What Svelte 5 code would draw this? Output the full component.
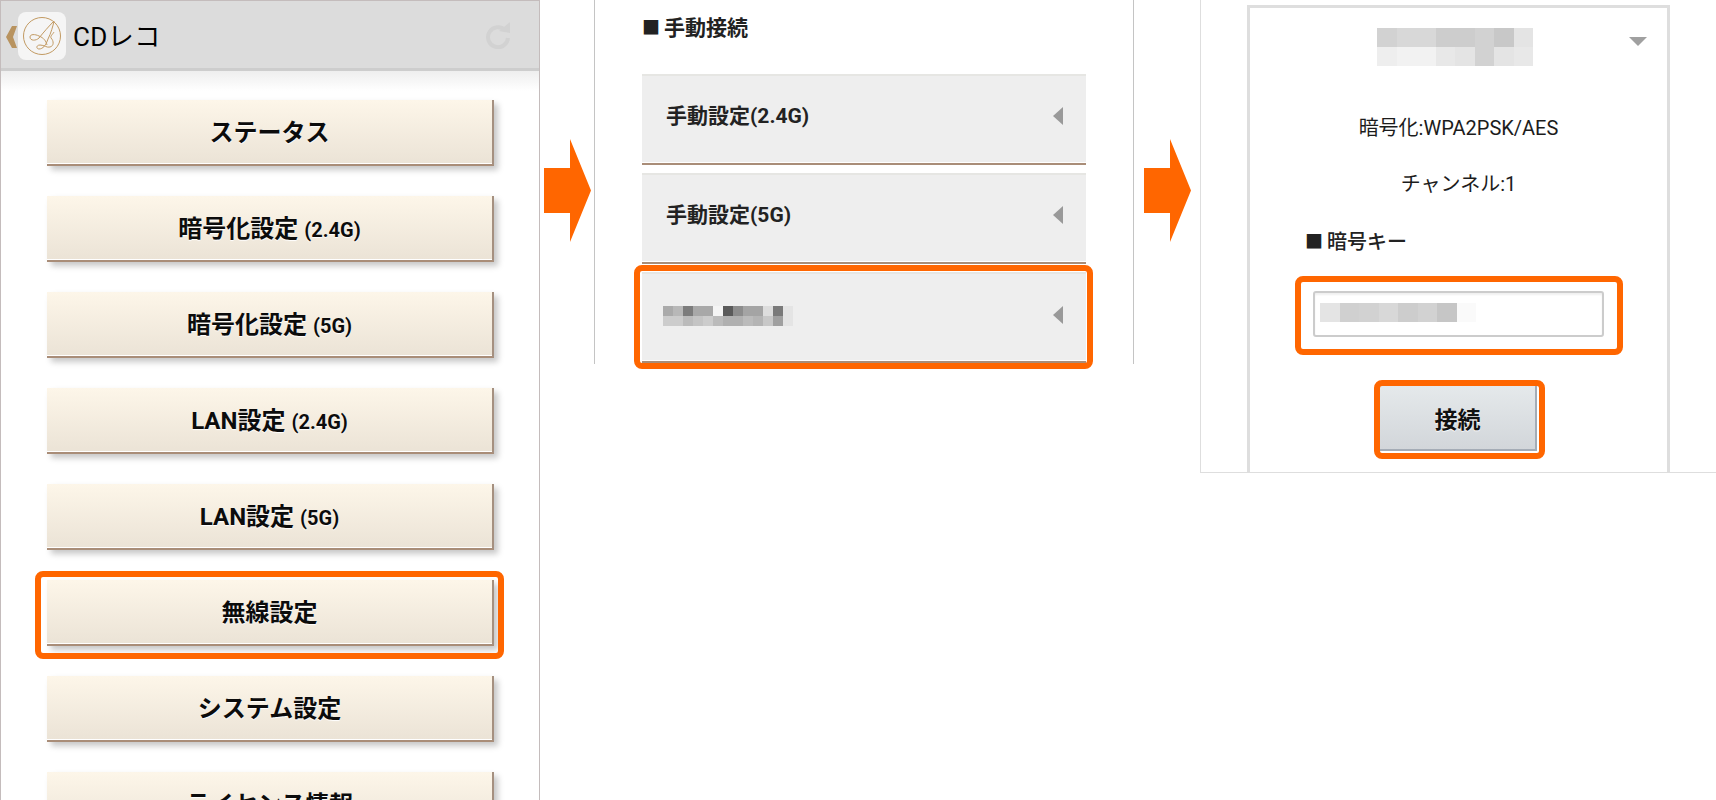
<script>
  const menu = [
    { label: "ステータス" },
    { label: "暗号化設定", small: "(2.4G)" },
    { label: "暗号化設定", small: "(5G)" },
    { label: "LAN設定", small: "(2.4G)" },
    { label: "LAN設定", small: "(5G)" },
    { label: "無線設定", active: true },
    { label: "システム設定" },
    { label: "ライセンス情報" },
  ];

  const ssidBlur = [
    ["#aaa", "#b8b8b8", "#7c7c7c", "#a8a8a8", "#a8a8a8", "#f4f4f4", "#5a5a5a", "#8c8c8c", "#a4a4a4", "#a4a4a4", "#ddd", "#7a7a7a", "#e4e4e4"],
    ["#ccc", "#ccc", "#bbb", "#c4c4c4", "#ccc", "#bbb", "#b0b0b0", "#b0b0b0", "#bbb", "#b4b4b4", "#c8c8c8", "#a0a0a0", "#e4e4e4"],
  ];
  const titleBlur = [
    ["#d2d2d2", "#d8d8d8", "#d8d8d8", "#cdcdcd", "#cdcdcd", "#d2d2d2", "#c8c8c8", "#e4e4e4"],
    ["#eee", "#f2f2f2", "#f2f2f2", "#e8e8e8", "#e4e4e4", "#d2d2d2", "#e4e4e4", "#e8e8e8"],
  ];
  const keyBlur = [["#e4e4e4", "#d0d0d0", "#d2d2d2", "#d8d8d8", "#cdcdcd", "#d2d2d2", "#c6c6c6", "#fafafa"]];
</script>

{#snippet mosaic(rows, size, h)}
  <div class="mosaic">
    {#each rows as row}
      <div class="mosaic-row">
        {#each row as c}
          <span style="background:{c};width:{size}px;height:{h}px"></span>
        {/each}
      </div>
    {/each}
  </div>
{/snippet}

{#snippet arrow()}
  <svg class="arrow" width="47" height="103" viewBox="0 0 47 103">
    <path d="M0 29H26V0L47 51.500 26 103V74H0Z" fill="#ff6600" />
  </svg>
{/snippet}

<div class="page">
  <section class="app">
    <header>
      <svg class="back" width="11" height="22" viewBox="0 0 11 22">
        <path d="M6 0H11L7 11 11 22H6L0 11Z" fill="#b8935f" />
      </svg>
      <div class="logo">
        <svg width="40" height="40" viewBox="0 0 40 40" fill="none" stroke="#c29a62" stroke-width="1">
          <circle cx="20" cy="20" r="18.500" />
          <path d="M32 5C27 10 21 17 17 22C14 25 8 25 8 21C8 18 13 18 17 20C22 22 24 25 25 29" />
          <path d="M32 5C31 10 29 17 26 23C24 29 21 33 17 33C14 33 14 29 18 29C22 29 25 32 28 31C32 30 32 25 29 22C28 20 31 18 32 16" />
        </svg>
      </div>
      <span class="title">CDレコ</span>
      <svg class="reload" width="26" height="28" viewBox="0 0 26 28" fill="none">
        <path d="M20 9A10 10 0 1 0 23 17" stroke="#d2d2d2" stroke-width="4" />
        <path d="M14 10L25 1V12Z" fill="#d2d2d2" />
      </svg>
    </header>
    <div class="menu">
      {#each menu as item}
        <button class="menu-btn" class:hl={item.active}>
          {item.label}{#if item.small}<small>{item.small}</small>{/if}
        </button>
      {/each}
    </div>
  </section>

  {@render arrow()}

  <section class="mid">
    <h3 class="heading"><span class="sq">■</span>手動接続</h3>
    <div class="rows">
      <div class="row"><span>手動設定(2.4G)</span><i class="tri-left"></i></div>
      <div class="row"><span>手動設定(5G)</span><i class="tri-left"></i></div>
      <div class="row hl">{@render mosaic(ssidBlur, 10, 10)}<i class="tri-left"></i></div>
    </div>
  </section>

  {@render arrow()}

  <section class="right">
    <div class="card">
      <div class="card-title">
        {@render mosaic(titleBlur, 19.500, 19)}
        <i class="tri-down"></i>
      </div>
      <p class="info first">暗号化:WPA2PSK/AES</p>
      <p class="info">チャンネル:1</p>
      <h3 class="heading key"><span class="sq">■</span>暗号キー</h3>
      <div class="input hl">{@render mosaic(keyBlur, 19.500, 19)}</div>
      <button class="connect hl">接続</button>
    </div>
  </section>
</div>

<style>
  :global(body) {
    background: #fff;
  }

  .page {
    display: flex;
    align-items: flex-start;
    width: 1716px;
    height: 800px;
    overflow: hidden;
    background: #fff;
    font-family: Roboto, "Noto Sans CJK JP", sans-serif;
    color: #111;
  }

  /* orange callout frames drawn over the target control */
  .hl {
    position: relative;
  }
  .hl::after {
    content: "";
    position: absolute;
    box-sizing: border-box;
    border: 6px solid #ff6600;
    border-radius: 8px;
    pointer-events: none;
  }

  /* left phone screen */
  .app {
    flex: none;
    width: 540px;
    height: 800px;
    box-sizing: border-box;
    border-left: 1px solid #c4bcbc;
    border-right: 1px solid #c4bcbc;
    border-top: 1px solid #c4bcbc;
  }
  header {
    display: flex;
    align-items: center;
    box-sizing: border-box;
    height: 70px;
    padding-left: 5px;
    background: #dcdcdc;
    border-bottom: 3px solid #cdcdcd;
  }
  .back {
    flex: none;
    margin-top: 4px;
  }
  .logo {
    flex: none;
    display: flex;
    align-items: center;
    justify-content: center;
    width: 48px;
    height: 48px;
    margin-left: 1px;
    margin-top: 2px;
    background: #f5f5f5;
    border-radius: 8px;
  }
  .title {
    margin-left: 7px;
    font-size: 26px;
    letter-spacing: 0.4px;
    color: #000;
  }
  .reload {
    margin-left: auto;
    margin-right: 28px;
  }

  .menu {
    display: flex;
    flex-direction: column;
    gap: 30px;
    padding: 29px 45px 0 46px;
    background: linear-gradient(#eeeeee, #fff 20px);
  }
  .menu-btn {
    flex: none;
    height: 66px;
    padding: 0 0 4px;
    border: 0;
    border-right: 2px solid #a59080;
    border-bottom: 2px solid #a98d78;
    background: linear-gradient(#fdf6e9, #ebe3d6);
    box-shadow: inset 0 -1px 0 #fff, 4px 4px 6px rgba(0, 0, 0, 0.22);
    font: 700 24px Roboto, "Noto Sans CJK JP", sans-serif;
    color: #0c0c0c;
    text-shadow: 0 1px 1px #fff;
  }
  .menu-btn.hl::after {
    inset: -9px -12px -15px -12px;
  }
  small {
    margin-left: 6px;
    font-size: 20px;
  }

  .arrow {
    flex: none;
    margin: 139px 3px 0 4px;
  }
  .mid + .arrow {
    margin-left: 10px;
  }

  /* middle screen */
  .mid {
    flex: none;
    width: 540px;
    height: 364px;
    box-sizing: border-box;
    padding: 0 47px;
    border-left: 1px solid #c4c4c4;
    border-right: 1px solid #c4c4c4;
  }
  .heading {
    display: flex;
    align-items: center;
    gap: 4px;
    margin: 0;
    font-size: 21px;
    font-weight: 700;
    line-height: 28px;
    color: #222;
  }
  .sq {
    font-size: 18px;
  }
  .mid .heading {
    padding-top: 14px;
  }
  .rows {
    display: flex;
    flex-direction: column;
    gap: 8px;
    margin-top: 32px;
  }
  .row {
    display: flex;
    align-items: flex-start;
    justify-content: space-between;
    box-sizing: border-box;
    height: 91px;
    padding: 25px 23px 0 24px;
    background: #eeeeee;
    border-top: 2px solid #e6e6e3;
    border-bottom: 2px solid #a98d78;
    box-shadow: inset 0 -1px 0 #fff;
    font-size: 21px;
    font-weight: 700;
    line-height: 30px;
    color: #222;
  }
  .row.hl {
    padding-top: 32px;
  }
  .row.hl .mosaic {
    margin-left: -3px;
  }
  .row.hl::after {
    inset: -9px -7px -8px -8px;
  }
  .tri-left {
    width: 0;
    height: 0;
    margin-top: 6px;
    border-top: 9px solid transparent;
    border-bottom: 9px solid transparent;
    border-right: 10px solid #999;
  }
  .row.hl .tri-left {
    margin-top: 0;
  }

  .mosaic {
    display: flex;
    flex-direction: column;
  }
  .mosaic-row {
    display: flex;
  }
  .mosaic span {
    display: block;
    flex: none;
  }

  /* right screen */
  .right {
    flex: none;
    width: 516px;
    height: 473px;
    box-sizing: border-box;
    margin-left: 6px;
    padding: 5px 46px 0;
    border-left: 1px solid #dedede;
    border-bottom: 1px solid #dedede;
  }
  .card {
    display: flex;
    flex-direction: column;
    align-items: center;
    box-sizing: border-box;
    height: 467px;
    border: solid #dedede;
    border-width: 3px 3px 0;
  }
  .card-title {
    position: relative;
    align-self: stretch;
    display: flex;
    justify-content: center;
    padding-top: 20px;
  }
  .card-title .mosaic {
    margin-right: 7px;
  }
  .tri-down {
    position: absolute;
    top: 29px;
    right: 20px;
    width: 0;
    height: 0;
    border-left: 9px solid transparent;
    border-right: 9px solid transparent;
    border-top: 9px solid #a0a0a0;
  }
  .info {
    margin: 28px 0 0;
    font-size: 20px;
    line-height: 28px;
    color: #1c1c1c;
  }
  .info.first {
    margin-top: 48px;
  }
  .heading.key {
    align-self: flex-start;
    margin-top: 30px;
    margin-left: 55px;
    font-size: 20px;
    font-weight: 500;
  }
  .input {
    flex: none;
    box-sizing: border-box;
    width: 291px;
    height: 46px;
    margin-top: 35px;
    padding: 10px 5px;
    background: #fff;
    border: 2px solid #ccc;
    border-radius: 3px;
    box-shadow: inset 0 2px 2px #f0f0f0;
  }
  .input.hl::after {
    inset: -17px -21px -20px -20px;
  }
  .connect {
    flex: none;
    width: 157px;
    height: 65px;
    margin-top: 49px;
    padding: 0;
    border: 0;
    border-right: 2px solid #a4acb6;
    border-bottom: 2px solid #a4acb6;
    background: linear-gradient(#e5e9eb, #d2d6da);
    font: 700 23px Roboto, "Noto Sans CJK JP", sans-serif;
    color: #111;
    text-shadow: 0 1px 1px #fff;
  }
  .connect.hl::after {
    inset: -6px -10px -10px -6px;
  }
</style>
